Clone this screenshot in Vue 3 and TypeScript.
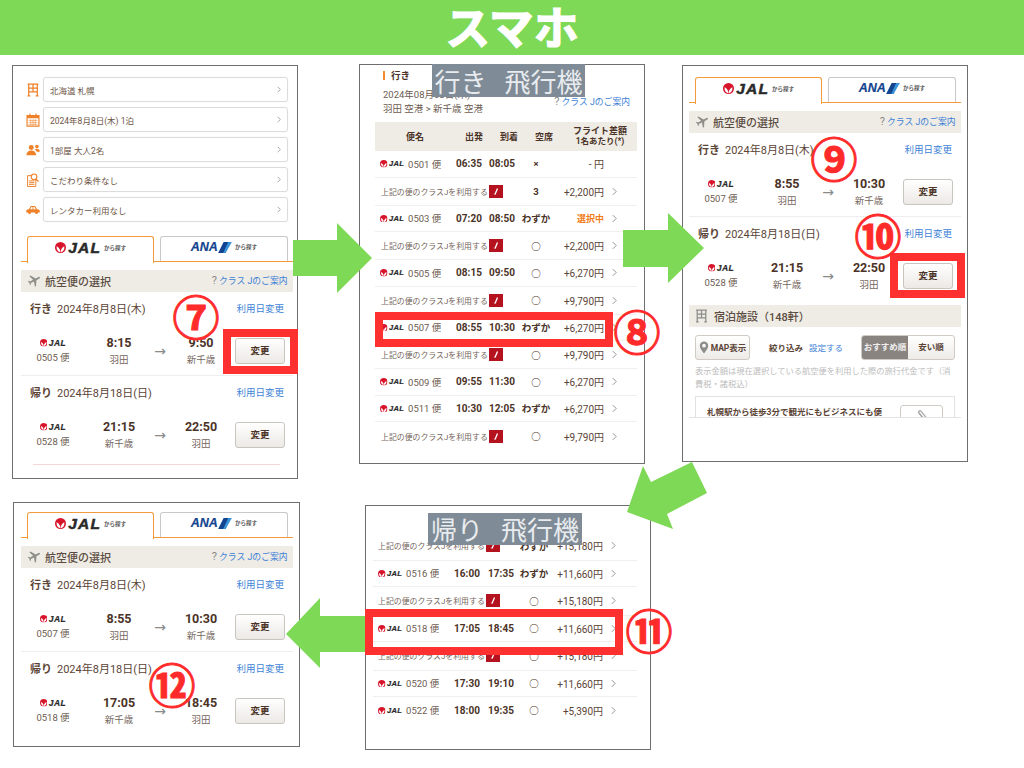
<script setup lang="ts">
interface Leg { title: string; date: string; no: string; t1: string; from: string; t2: string; to: string }
interface SelPanel { id: string; form: boolean; hotel: boolean; pink: boolean; legs: Leg[] }
interface Row { no?: string; dep?: string; arr?: string; seat: string; price: string; selected?: boolean }
interface TablePanel { id: string; head: boolean; rows: Row[] }

const formRows = [
  { icon: 'i-hotel', text: '北海道 札幌' },
  { icon: 'i-cal', text: '2024年8月8日(木) 1泊' },
  { icon: 'i-people', text: '1部屋 大人2名' },
  { icon: 'i-search', text: 'こだわり条件なし' },
  { icon: 'i-car', text: 'レンタカー利用なし' },
]

const d1 = '2024年8月8日(木)'
const d2 = '2024年8月18日(日)'
const selPanels: SelPanel[] = [
  {
    id: 'p1', form: true, hotel: false, pink: true,
    legs: [
      { title: '行き', date: d1, no: '0505 便', t1: '8:15', from: '羽田', t2: '9:50', to: '新千歳' },
      { title: '帰り', date: d2, no: '0528 便', t1: '21:15', from: '新千歳', t2: '22:50', to: '羽田' },
    ],
  },
  {
    id: 'p3', form: false, hotel: true, pink: false,
    legs: [
      { title: '行き', date: d1, no: '0507 便', t1: '8:55', from: '羽田', t2: '10:30', to: '新千歳' },
      { title: '帰り', date: d2, no: '0528 便', t1: '21:15', from: '新千歳', t2: '22:50', to: '羽田' },
    ],
  },
  {
    id: 'p5', form: false, hotel: false, pink: false,
    legs: [
      { title: '行き', date: d1, no: '0507 便', t1: '8:55', from: '羽田', t2: '10:30', to: '新千歳' },
      { title: '帰り', date: d2, no: '0518 便', t1: '17:05', from: '新千歳', t2: '18:45', to: '羽田' },
    ],
  },
]

const tablePanels: TablePanel[] = [
  {
    id: 'p2', head: true,
    rows: [
      { no: '0501 便', dep: '06:35', arr: '08:05', seat: '×', price: '- 円' },
      { seat: '3', price: '+2,200円' },
      { no: '0503 便', dep: '07:20', arr: '08:50', seat: 'わずか', price: '選択中', selected: true },
      { seat: '○', price: '+2,200円' },
      { no: '0505 便', dep: '08:15', arr: '09:50', seat: '○', price: '+6,270円' },
      { seat: '○', price: '+9,790円' },
      { no: '0507 便', dep: '08:55', arr: '10:30', seat: 'わずか', price: '+6,270円' },
      { seat: '○', price: '+9,790円' },
      { no: '0509 便', dep: '09:55', arr: '11:30', seat: '○', price: '+6,270円' },
      { no: '0511 便', dep: '10:30', arr: '12:05', seat: 'わずか', price: '+6,270円' },
      { seat: '○', price: '+9,790円' },
    ],
  },
  {
    id: 'p4', head: false,
    rows: [
      { seat: 'わずか', price: '+15,180円' },
      { no: '0516 便', dep: '16:00', arr: '17:35', seat: 'わずか', price: '+11,660円' },
      { seat: '○', price: '+15,180円' },
      { no: '0518 便', dep: '17:05', arr: '18:45', seat: '○', price: '+11,660円' },
      { seat: '○', price: '+15,180円' },
      { no: '0520 便', dep: '17:30', arr: '19:10', seat: '○', price: '+11,660円' },
      { no: '0522 便', dep: '18:00', arr: '19:35', seat: '○', price: '+5,390円' },
    ],
  },
]

const arrows = [
  '293,240 337,240 337,223 372,258 337,293 337,276 293,276',
  '623,230 668,230 668,213 704,248 668,283 668,267 623,267',
  '627,512 643,466 651,482 692,462 707,493 667,514 673,529',
  '286,634 320,598 320,616 365,616 365,652 320,652 320,668',
]
const redBoxes = ['b7', 'b8', 'b10', 'b11']
const marks = [
  { id: 'm7', text: '⑦' },
  { id: 'm8', text: '⑧' },
  { id: 'm9', text: '⑨' },
  { id: 'm10', text: '⑩' },
  { id: 'm11', text: '⑪' },
  { id: 'm12', text: '⑫' },
]
</script>

<template>
  <div class="canvas">
    <svg class="defs" width="0" height="0" aria-hidden="true">
      <symbol id="i-crane" viewBox="0 0 24 24">
        <circle cx="12" cy="12" r="12" fill="#d8142b" />
        <path d="M11.4 22.5C6 21.5 2.6 16.5 3.6 9.5C7.4 11.5 10.2 14.5 11.4 19Z" fill="#fff" />
        <path d="M12.6 22.5C18 21.5 21.4 16.5 20.4 9.5C16.6 11.5 13.8 14.5 12.6 19Z" fill="#fff" />
      </symbol>
      <symbol id="i-plane" viewBox="0 0 24 24">
        <path transform="rotate(62 12 12)" fill="currentColor" d="M21 16v-2l-8-5V3.5c0-.83-.67-1.5-1.5-1.5S10 2.67 10 3.5V9l-8 5v2l8-2.5V19l-2 1.5V22l3.5-1 3.5 1v-1.5L13 19v-5.5l8 2.5z" />
      </symbol>
      <symbol id="i-hotel" viewBox="0 0 16 18">
        <path fill="none" stroke="currentColor" stroke-width="1.6" d="M1 1.5h14M2.500 1.500V17M13.500 1.500V17M2.500 6.500h11M2.500 11.500h11M8 1.500v10M1 16.600h3.500M11.500 16.600h3.500" />
      </symbol>
      <symbol id="i-cal" viewBox="0 0 16 16">
        <path fill="none" stroke="currentColor" stroke-width="1.3" d="M1.200 3h13.600v12H1.200zM4.500.6v3.600M11.500.6v3.600" />
        <path fill="currentColor" d="M1.200 3h13.600v3H1.200z" />
        <path fill="none" stroke="currentColor" stroke-width=".8" opacity=".75" d="M3 8.500h10M3 10.800h10M3 13h10M5.400 7v7M8 7v7M10.600 7v7" />
      </symbol>
      <symbol id="i-people" viewBox="0 0 16 13">
        <circle cx="6" cy="3.600" r="2.800" fill="currentColor" />
        <path fill="currentColor" d="M.5 12.600c0-3.600 2.200-5.600 5.500-5.600s5.500 2 5.500 5.600z" />
        <circle cx="12.500" cy="2.600" r="2" fill="currentColor" />
        <path fill="currentColor" d="M10 5.800c.8-.5 1.600-.7 2.500-.7 2 0 3.300 1.300 3.300 3.400h-3.400c-.5-1.200-1.300-2-2.400-2.700z" />
      </symbol>
      <symbol id="i-search" viewBox="0 0 14 16">
        <path fill="none" stroke="currentColor" stroke-width="1.100" d="M.8 3h9.400v12.400H.8zM2.500 9h6M2.500 11h6M2.500 13h6" />
        <circle cx="8.200" cy="4.400" r="3.200" fill="#fff" stroke="currentColor" stroke-width="1.300" />
        <path fill="none" stroke="currentColor" stroke-width="1.500" d="M10.400 6.800l2.800 3" />
      </symbol>
      <symbol id="i-car" viewBox="0 0 16 10">
        <path fill="currentColor" d="M.3 5.400C1 4.700 2 4.400 3.400 4.200L5 1.200C5.200.7 5.600.5 6 .5h4c.4 0 .8.2 1 .7l1.600 3c1.400.2 2.400.5 3.100 1.200v2.400H.3z" />
        <circle cx="4" cy="8" r="1.700" fill="currentColor" />
        <circle cx="12" cy="8" r="1.700" fill="currentColor" />
        <path fill="#fff" d="M6.100 1.700h1.400v2.400H4.900zM8.500 1.700h1.400l1.200 2.400H8.500z" />
      </symbol>
      <symbol id="i-pin" viewBox="0 0 12 16">
        <path fill="currentColor" fill-rule="evenodd" d="M6 .5a5.200 5.200 0 0 1 5.200 5.200C11.200 9 8 12.600 6 15.500 4 12.600.8 9 .8 5.700A5.200 5.200 0 0 1 6 .5zm0 3a2.300 2.300 0 1 0 0 4.600 2.300 2.300 0 0 0 0-4.600z" />
      </symbol>
      <symbol id="i-chev" viewBox="0 0 6 10">
        <path fill="none" stroke="currentColor" stroke-width="1.100" d="M1 1l4 4-4 4" />
      </symbol>
      <symbol id="i-classj" viewBox="0 0 14 13">
        <rect width="14" height="13" fill="#b5121f" />
        <path fill="none" stroke="#fff" stroke-width="1.300" d="M8.500 3.500L6 9.500" />
        <path fill="none" stroke="#e9a5a9" stroke-width=".8" d="M6 9.500L4.800 8.800" />
      </symbol>
      <symbol id="i-clip" viewBox="0 0 14 16">
        <path fill="none" stroke="currentColor" stroke-width="1.500" d="M2.500 3.500l7 9c1.500 2 4-.5 2.500-2.500L6 2.500C5 1 2.500 2 3.500 4l5.500 7" />
      </symbol>
      <symbol id="i-ana" viewBox="0 0 15 12">
        <path fill="#13448f" d="M6 0h8L8 12H0z" />
        <path fill="#3a94d8" d="M11 0h4L8 12H5.500z" />
      </symbol>
    </svg>

    <header class="banner">スマホ</header>

    <section v-for="panel in selPanels" :key="panel.id" class="panel" :class="panel.id">
      <div v-if="panel.form" class="form">
        <div v-for="row in formRows" :key="row.text" class="form-row">
          <svg class="form-icon"><use :href="'#' + row.icon" /></svg>
          <div class="form-field">
            <span>{{ row.text }}</span>
            <svg class="chev"><use href="#i-chev" /></svg>
          </div>
        </div>
      </div>

      <div class="sel">
        <div class="tabs">
          <div class="tab tab-on">
            <svg class="crane-lg"><use href="#i-crane" /></svg>
            <span class="jal-lg">JAL</span>
            <span class="tab-note">から探す</span>
          </div>
          <div class="tab">
            <span class="ana">ANA</span>
            <svg class="ana-mark"><use href="#i-ana" /></svg>
            <span class="tab-note">から探す</span>
          </div>
        </div>

        <div class="section">
          <svg class="section-icon"><use href="#i-plane" /></svg>
          <span class="section-title">航空便の選択</span>
          <span class="help"><i>?</i> クラス Jのご案内</span>
        </div>

        <div v-for="leg in panel.legs" :key="leg.title" class="leg">
          <div class="leg-head">
            <b>{{ leg.title }}</b>
            <span class="leg-date">{{ leg.date }}</span>
            <span class="leg-link">利用日変更</span>
          </div>
          <div class="leg-flight">
            <div class="leg-cell">
              <span class="jal-sm-wrap">
                <svg class="crane-sm"><use href="#i-crane" /></svg>
                <span class="jal-sm">JAL</span>
              </span>
              <span class="leg-no">{{ leg.no }}</span>
            </div>
            <div class="leg-cell">
              <strong>{{ leg.t1 }}</strong>
              <span class="leg-place">{{ leg.from }}</span>
            </div>
            <span class="leg-arrow">→</span>
            <div class="leg-cell">
              <strong>{{ leg.t2 }}</strong>
              <span class="leg-place">{{ leg.to }}</span>
            </div>
            <span class="change">変更</span>
          </div>
        </div>

        <div v-if="panel.pink" class="pink"></div>

        <div v-if="panel.hotel" class="hotel">
          <div class="section">
            <svg class="section-icon hotel-icon"><use href="#i-hotel" /></svg>
            <span class="section-title">宿泊施設（148軒）</span>
          </div>
          <div class="tools">
            <span class="map-btn"><svg class="pin"><use href="#i-pin" /></svg>MAP表示</span>
            <span class="filter"><b>絞り込み</b><em>設定する</em></span>
            <span class="sort"><b class="sort-on">おすすめ順</b><b>安い順</b></span>
          </div>
          <div class="clip">
            <p class="note">表示金額は現在選択している航空便を利用した際の旅行代金です（消費税・諸税込）</p>
            <div class="card">
              <span class="card-title">札幌駅から徒歩3分で観光にもビジネスにも便</span>
              <span class="card-btn"><svg class="clip-icon"><use href="#i-clip" /></svg></span>
            </div>
          </div>
        </div>
      </div>
    </section>

    <section v-for="panel in tablePanels" :key="panel.id" class="panel" :class="panel.id">
      <div v-if="panel.head" class="t-top">
        <div class="t-title">行き</div>
        <div class="t-info">
          <div>
            <div>2024年08月08日(木)</div>
            <div>羽田 空港 &gt; 新千歳 空港</div>
          </div>
          <span class="help"><i>?</i> クラス Jのご案内</span>
        </div>
      </div>
      <div class="table">
        <div v-if="panel.head" class="t-head">
          <span>便名</span>
          <span>出発</span>
          <span>到着</span>
          <span>空席</span>
          <span class="t-head-price">フライト差額<small>1名あたり(*)</small></span>
        </div>
        <div v-for="(row, i) in panel.rows" :key="i" class="t-row" :class="row.no ? 'is-flight' : 'is-j'">
          <template v-if="row.no">
            <span class="t-name">
              <svg class="crane-sm"><use href="#i-crane" /></svg>
              <span class="jal-sm">JAL</span>
              <span class="t-no">{{ row.no }}</span>
            </span>
            <b class="t-time">{{ row.dep }}</b>
            <b class="t-time">{{ row.arr }}</b>
          </template>
          <span v-else class="t-j">
            <span>上記の便のクラスJを利用する</span>
            <svg class="classj"><use href="#i-classj" /></svg>
          </span>
          <span class="t-seat">{{ row.seat }}</span>
          <span class="t-price" :class="{ 't-selected': row.selected }">{{ row.price }}</span>
          <svg v-if="i > 0 || !panel.head" class="t-chev"><use href="#i-chev" /></svg>
        </div>
      </div>
    </section>

    <div class="label label-out">行き 飛行機</div>
    <div class="label label-ret">帰り 飛行機</div>

    <svg class="arrows" viewBox="0 0 1024 768" width="1024" height="768" aria-hidden="true">
      <polygon v-for="a in arrows" :key="a" :points="a" fill="#7ed957" />
    </svg>

    <div v-for="b in redBoxes" :key="b" class="redbox" :class="b"></div>
    <span v-for="m in marks" :key="m.id" class="mark" :class="m.id">{{ m.text }}</span>
  </div>
</template>

<style>
html, body { margin: 0; background: #fff; }
</style>

<style scoped>
.canvas {
  position: relative;
  width: 1024px;
  height: 768px;
  overflow: hidden;
  background: #fff;
  font-family: Roboto, "Noto Sans CJK JP", sans-serif;
  color: #5b4436;
}
.defs { position: absolute; }

.banner {
  height: 55px;
  background: #7ed957;
  color: #fff;
  font: 700 45px/51px "Noto Sans CJK JP", sans-serif;
  text-align: center;
  -webkit-text-stroke: 1.2px #fff;
}

/* screenshots placed on the canvas */
.panel {
  position: absolute;
  box-sizing: border-box;
  border: 1px solid #6e6e6e;
  background: #fff;
  overflow: hidden;
}
.p1 { left: 12px; top: 65px; width: 286px; height: 414px; padding: 11px 0 0 8px; }
.p2 { left: 359px; top: 64px; width: 286px; height: 400px; }
.p3 { left: 682px; top: 65px; width: 286px; height: 397px; padding: 11px 0 0 6px; }
.p4 { left: 365px; top: 505px; width: 286px; height: 245px; padding-top: 26px; }
.p5 { left: 13px; top: 502px; width: 287px; height: 245px; padding: 9px 0 0 7px; }

/* search form */
.form { display: flex; flex-direction: column; gap: 5px; margin-bottom: 14px; width: 272px; }
.form-row { display: flex; align-items: center; height: 25px; }
.form-icon { width: 14px; height: 14px; margin-left: 4.500px; color: #ef8128; flex: none; }
.form-field {
  box-sizing: border-box;
  flex: none;
  width: 245px;
  height: 25px;
  margin-left: 3.500px;
  padding: 0 6px 0 6px;
  display: flex;
  align-items: center;
  justify-content: space-between;
  border: 1px solid #dcdcdc;
  border-radius: 3px;
  box-shadow: 0 0 1px #ddd;
  font-size: 8.500px;
  color: #6d5446;
}
.chev { width: 4px; height: 7px; color: #8c8c8c; }

/* selection block */
.sel { width: 272px; }
.tabs {
  display: grid;
  grid-template-columns: 1fr 1fr;
  gap: 6px;
  padding: 0 5.500px 0 6px;
  border-bottom: 1.500px solid #f39a3c;
  height: 25px;
}
.tab {
  box-sizing: border-box;
  height: 25px;
  border: 1.500px solid #c9c9c9;
  border-bottom: 0;
  border-radius: 3px 3px 0 0;
  display: flex;
  align-items: center;
  justify-content: center;
  padding-bottom: 4px;
  background: #fff;
}
.tab-on {
  height: 26.500px;
  border-color: #f39a3c;
  position: relative;
}
.crane-lg { width: 11px; height: 11px; margin-right: 2px; }
.jal-lg {
  font: italic 700 15.500px/1 "Liberation Sans", sans-serif;
  letter-spacing: 1.200px;
  color: #2a2a2a;
  -webkit-text-stroke: .5px #2a2a2a;
}
.tab-note { font-size: 5.500px; font-weight: 700; color: #555; margin-left: 3px; }
.ana {
  font: italic 700 12.500px/1 "Liberation Sans", sans-serif;
  color: #13448f;
  -webkit-text-stroke: .2px #13448f;
}
.ana-mark { width: 14px; height: 11px; }

.section {
  display: flex;
  align-items: center;
  height: 22px;
  margin-top: 7.500px;
  padding: 0 5.500px 0 6px;
  background: #efece6;
}
.section-icon { width: 15px; height: 15px; color: #8e8e8a; flex: none; }
.hotel-icon { width: 13px; height: 14px; margin-right: 3px; }
.section-title { margin-left: 3px; font-size: 11px; font-weight: 500; color: #5c4c42; }
.help { margin-left: auto; font-size: 8.800px; color: #3d7fd6; white-space: nowrap; }
.help i { font-style: normal; font-size: 11px; color: #888; }

.leg { height: 83px; padding-top: 7px; box-sizing: border-box; }
.leg:nth-of-type(3) { height: 84px; border-bottom: 1px solid #eee; }
.leg-head { display: flex; align-items: center; height: 18px; padding: 0 9px; font-size: 11px; color: #5b4436; }
.leg-head b { font-weight: 700; }
.leg-date { margin-left: 5px; }
.leg-link { margin-left: auto; font-size: 9.500px; color: #3d7fd6; }
.leg-flight {
  display: grid;
  grid-template-columns: 64px 68px 14px 68px 50px;
  align-items: center;
  margin-top: 18px;
  height: 26px;
}
.leg-cell { display: flex; flex-direction: column; align-items: center; }
.leg-cell strong { font-size: 12.500px; line-height: 16px; font-weight: 700; color: #4b3327; }
.leg-place { font-size: 9.500px; line-height: 14px; margin-top: 2px; color: #75665c; }
.leg-no { font-size: 9.500px; line-height: 12px; margin-top: 3px; color: #6d5c52; }
.jal-sm-wrap { display: flex; align-items: center; height: 12px; }
.leg-arrow { font: 14px/1 "DejaVu Sans", sans-serif; color: #8a8a8a; text-align: center; }
.change {
  box-sizing: border-box;
  height: 26px;
  line-height: 24px;
  text-align: center;
  font-size: 9.500px;
  font-weight: 700;
  color: #4b3327;
  border: 1px solid #c8c4be;
  border-radius: 3px;
  background: linear-gradient(#fff, #ece9e5);
}
.crane-sm { width: 7.500px; height: 7.500px; flex: none; }
.jal-sm {
  margin-left: 1.500px;
  font: italic 700 8.500px/1 "Liberation Sans", sans-serif;
  letter-spacing: .5px;
  color: #2a2a2a;
  -webkit-text-stroke: .2px #2a2a2a;
}
.pink { height: 1px; margin: 5px 13px 0 12px; background: #f9d6d6; }

/* hotel block */
.hotel { margin-top: 5px; }
.hotel .section { margin-top: 0; }
.tools { display: flex; align-items: center; height: 25px; margin-top: 8px; padding: 0 6px; }
.map-btn {
  box-sizing: border-box;
  width: 55px;
  height: 25px;
  display: flex;
  align-items: center;
  justify-content: center;
  gap: 2px;
  font-size: 8.500px;
  font-weight: 700;
  color: #5b4436;
  border: 1px solid #cfcac4;
  border-radius: 3px;
  background: linear-gradient(#fff, #eeebe7);
}
.pin { width: 10px; height: 13px; color: #8c8c88; }
.filter { margin-left: 19px; display: flex; gap: 6px; font-size: 8.500px; }
.filter em { font-style: normal; color: #3d7fd6; }
.sort {
  box-sizing: border-box;
  display: grid;
  grid-template-columns: 1fr 1fr;
  width: 94px;
  height: 25px;
  margin-left: auto;
  border: 1px solid #cfcac4;
  border-radius: 3px;
  background: linear-gradient(#fff, #eeebe7);
  font-size: 8.500px;
  text-align: center;
  line-height: 23px;
  overflow: hidden;
  white-space: nowrap;
}
.sort b { font-weight: 700; }
.sort-on { background: #8a8480; color: #eee; }
.clip {
  height: 58px;
  padding: 5px 6px 0;
  box-sizing: border-box;
  overflow: hidden;
  border-bottom: 1px solid #e4e4e4;
}
.note { margin: 0; font-size: 8.250px; line-height: 13px; color: #bcbcbc; }
.card {
  display: flex;
  justify-content: space-between;
  box-sizing: border-box;
  height: 60px;
  margin-top: 5px;
  padding: 8px 11px;
  border: 1px solid #e2e2e2;
}
.card-title { font-size: 8.500px; font-weight: 700; line-height: 14px; color: #5b4436; }
.card-btn {
  box-sizing: border-box;
  width: 43px;
  height: 30px;
  text-align: center;
  border: 1px solid #cfcac4;
  border-radius: 3px;
}
.clip-icon { width: 12px; height: 14px; margin-top: 3px; color: #a8a8a8; }

/* flight tables */
.t-top { height: 56.500px; padding-top: 6px; box-sizing: border-box; }
.t-title {
  margin-left: 23px;
  height: 9px;
  padding-left: 6px;
  border-left: 2.500px solid #f28a2e;
  font-size: 9.500px;
  font-weight: 700;
  line-height: 9px;
  color: #4b3327;
}
.t-info {
  display: flex;
  justify-content: space-between;
  align-items: center;
  margin: 8px 0 0 23px;
  padding-right: 14px;
  font-size: 9.500px;
  line-height: 14px;
  color: #6d5c52;
}
.table { margin-left: 15px; width: 262px; }
.p4 .table { margin-left: 7px; width: 264px; }
.t-head {
  display: grid;
  grid-template-columns: 80px 38px 32px 38px 74px;
  align-items: center;
  justify-items: center;
  height: 29.500px;
  background: #efece6;
  font-size: 9px;
  font-weight: 700;
  color: #4b3327;
}
.t-head-price { display: flex; flex-direction: column; align-items: center; line-height: 10px; }
.t-head-price small { font-size: 8.500px; font-weight: 700; line-height: 10px; }
.t-row {
  display: grid;
  grid-template-columns: 80px 28px 38px 30px 53px 20px;
  align-items: center;
  box-sizing: border-box;
  height: 28px;
  border-bottom: 1px solid #f1efec;
  font-size: 9.500px;
}
.t-row:last-child { border-bottom: 0; }
.p4 .t-row { grid-template-columns: 80px 28px 40px 26px 56px 20px; height: 28.500px; }
.t-row.is-flight, .p4 .t-row.is-flight { height: 26.500px; }
.t-name { display: flex; align-items: center; padding-left: 5px; white-space: nowrap; }
.t-name .jal-sm { font-size: 7.500px; letter-spacing: .3px; }
.t-no { margin-left: 4px; font-size: 9.500px; color: #6d5c52; }
.t-time { text-align: center; font-size: 10px; font-weight: 700; color: #4b3327; }
.t-j {
  grid-column: 1 / 4;
  display: flex;
  align-items: center;
  padding-left: 6px;
  font-size: 7.900px;
  color: #75665c;
  white-space: nowrap;
}
.p4 .t-j { padding-left: 5px; }
.classj { width: 14px; height: 13px; margin-left: 1px; flex: none; }
.t-seat {
  display: flex;
  justify-content: center;
  white-space: nowrap;
  font-weight: 700;
  font-size: 9.500px;
  color: #4b3327;
}
.t-price { text-align: right; font-size: 10px; color: #5b4436; white-space: nowrap; }
.t-selected { color: #f07d1a; font-size: 9px; font-weight: 700; }
.t-chev { width: 5px; height: 9px; justify-self: center; color: #8a8a8a; }

/* annotations laid over the screenshots */
.label {
  position: absolute;
  box-sizing: border-box;
  display: flex;
  align-items: center;
  justify-content: center;
  background: #7f8b96;
  color: #e9ecef;
  font: 400 26px/1 "Noto Sans CJK JP", sans-serif;
  word-spacing: 12px;
  white-space: nowrap;
}
.label-out { left: 432px; top: 64px; width: 153px; height: 33px; }
.label-ret { left: 428px; top: 513px; width: 154px; height: 32px; }

.arrows { position: absolute; left: 0; top: 0; pointer-events: none; }

.redbox { position: absolute; box-sizing: border-box; border: 8px solid #ff3030; }
.b7 { left: 223px; top: 329px; width: 75px; height: 45px; }
.b8 { left: 375px; top: 312px; width: 238px; height: 35px; }
.b10 { left: 890px; top: 253px; width: 75px; height: 45px; }
.b11 { left: 365px; top: 609px; width: 258px; height: 46px; }

.mark {
  position: absolute;
  width: 60px;
  height: 60px;
  text-align: center;
  font: 700 47px/60px "Noto Sans CJK JP", sans-serif;
  color: #ff2b2b;
  -webkit-text-stroke: 1px #ff2b2b;
}
.m7 { left: 166px; top: 285px; }
.m8 { left: 607px; top: 300px; }
.m9 { left: 804px; top: 127px; }
.m10 { left: 848px; top: 204px; }
.m11 { left: 619px; top: 599px; }
.m12 { left: 142px; top: 653px; }
</style>
